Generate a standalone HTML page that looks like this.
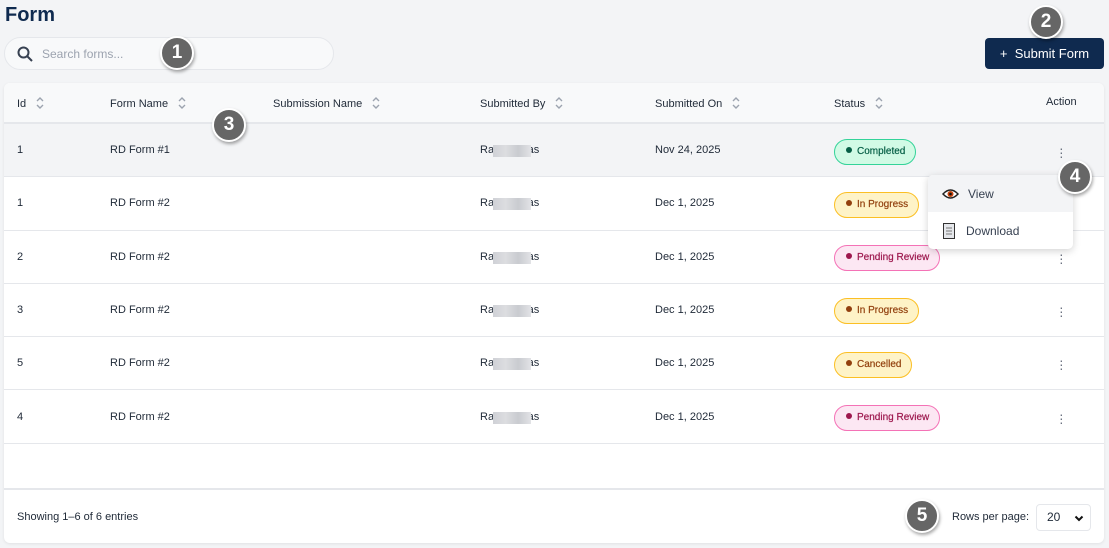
<!DOCTYPE html>
<html><head><meta charset="utf-8"><style>
*{box-sizing:border-box;margin:0;padding:0}
body{width:1109px;height:548px;background:#f3f4f6;font-family:"Liberation Sans",sans-serif;position:relative;overflow:hidden;color:#1f2937}
.abs{position:absolute}
h1{position:absolute;left:5px;top:4px;font-size:20px;font-weight:700;color:#0f2a4f}
.search{left:4px;top:37px;width:330px;height:33px;border:1px solid #e5e7eb;border-radius:17px;background:#f8f9fa}
.search span{position:absolute;left:37px;top:9px;font-size:12px;color:#9ca3af}
.btn{left:985px;top:38px;width:119px;height:31px;background:#0f2a4f;border-radius:4px;color:#fff;font-size:13px;line-height:31px;text-align:center}
.card{left:4px;top:83px;width:1100px;height:460px;background:#fff;border-radius:6px;box-shadow:0 1px 3px rgba(0,0,0,.08);overflow:hidden}
.thead{position:absolute;left:0;top:0;width:100%;height:41px;background:#f8f9fa;border-bottom:2px solid #e5e7eb}
.th{position:absolute;top:13px;font-size:11px;color:#1f2937}
.sort{display:inline-block;margin-left:9px;vertical-align:middle;position:relative;top:-1px}
.row{position:absolute;left:0;width:100%;border-bottom:1px solid #e5e7eb}
.td{position:absolute;font-size:11px;color:#1f2937}
.badge{position:absolute;left:830px;height:26px;border-radius:13px;font-size:10px;padding:0 10px 0 11px;line-height:24px;border:1px solid;-webkit-text-stroke:.2px}
.badge i{display:inline-block;width:6px;height:6px;border-radius:3px;margin-right:5px;vertical-align:middle;position:relative;top:-1px}
.dots{position:absolute;left:1055px;font-size:14px;color:#6b7280;line-height:4px;width:4px}
.blur{position:absolute;left:493px;width:38px;height:12px;background:linear-gradient(90deg,#cfd1d6,#dcdde0,#c9cbd0,#e2e3e6)}
.m{position:absolute;width:34px;height:34px;border-radius:17px;background:#666;border:2px solid #fff;box-shadow:1px 2px 3px rgba(0,0,0,.35);color:#fff;font-weight:700;font-size:19px;text-align:center;line-height:30px}
.menu{left:928px;top:175px;width:145px;height:74px;background:#fff;border-radius:5px;box-shadow:0 2px 8px rgba(0,0,0,.18)}
</style></head><body>
<h1>Form</h1>
<div class="abs search"><svg class="abs" style="left:12px;top:8px" width="16" height="16" viewBox="0 0 16 16"><circle cx="6.5" cy="6.5" r="5" fill="none" stroke="#374151" stroke-width="2"/><path d="M10 10l5 5" stroke="#374151" stroke-width="2"/></svg><span>Search forms...</span></div>
<div class="abs btn">+&nbsp;&nbsp;Submit Form</div>
<div class="abs card">
<div class="thead">
<div class="th" style="left:13px">Id<svg class="sort" width="10" height="16" viewBox="0 0 10 16"><path d="M2 6l3-3 3 3M2 10l3 3 3-3" fill="none" stroke="#9ca3af" stroke-width="1.4"/></svg></div>
<div class="th" style="left:106px">Form Name<svg class="sort" width="10" height="16" viewBox="0 0 10 16"><path d="M2 6l3-3 3 3M2 10l3 3 3-3" fill="none" stroke="#9ca3af" stroke-width="1.4"/></svg></div>
<div class="th" style="left:269px">Submission Name<svg class="sort" width="10" height="16" viewBox="0 0 10 16"><path d="M2 6l3-3 3 3M2 10l3 3 3-3" fill="none" stroke="#9ca3af" stroke-width="1.4"/></svg></div>
<div class="th" style="left:476px">Submitted By<svg class="sort" width="10" height="16" viewBox="0 0 10 16"><path d="M2 6l3-3 3 3M2 10l3 3 3-3" fill="none" stroke="#9ca3af" stroke-width="1.4"/></svg></div>
<div class="th" style="left:651px">Submitted On<svg class="sort" width="10" height="16" viewBox="0 0 10 16"><path d="M2 6l3-3 3 3M2 10l3 3 3-3" fill="none" stroke="#9ca3af" stroke-width="1.4"/></svg></div>
<div class="th" style="left:830px">Status<svg class="sort" width="10" height="16" viewBox="0 0 10 16"><path d="M2 6l3-3 3 3M2 10l3 3 3-3" fill="none" stroke="#9ca3af" stroke-width="1.4"/></svg></div>
<div class="th" style="left:1042px">Action</div>
</div>
<div class="row" style="top:41px;height:53px;background:#f3f4f6"></div>
<div class="row" style="top:94px;height:54px"></div>
<div class="row" style="top:148px;height:53px"></div>
<div class="row" style="top:201px;height:53px"></div>
<div class="row" style="top:254px;height:53px"></div>
<div class="row" style="top:307px;height:54px"></div>
<div class="row" style="top:361px;height:46px;border-bottom:2px solid #e5e7eb"></div>

<div class="td" style="left:13px;top:61px">1</div><div class="td" style="left:106px;top:61px">RD Form #1</div><div class="td" style="left:476px;top:61px">Ra&nbsp;&nbsp;&nbsp;&nbsp;&nbsp;&nbsp;&nbsp;&nbsp;&nbsp;&nbsp;&nbsp;as</div><div class="blur" style="top:62px;left:489px"></div><div class="td" style="left:651px;top:61px">Nov 24, 2025</div>
<div class="badge" style="top:56px;background:#d1fae5;border-color:#34d399;color:#065f46"><i style="background:#065f46"></i>Completed</div><div class="dots" style="top:63px">·<br>·<br>·</div>

<div class="td" style="left:13px;top:114px">1</div><div class="td" style="left:106px;top:114px">RD Form #2</div><div class="td" style="left:476px;top:114px">Ra&nbsp;&nbsp;&nbsp;&nbsp;&nbsp;&nbsp;&nbsp;&nbsp;&nbsp;&nbsp;&nbsp;as</div><div class="blur" style="top:115px;left:489px"></div><div class="td" style="left:651px;top:114px">Dec 1, 2025</div>
<div class="badge" style="top:109px;background:#fef3c7;border-color:#fbbf24;color:#92400e"><i style="background:#92400e"></i>In Progress</div>

<div class="td" style="left:13px;top:168px">2</div><div class="td" style="left:106px;top:168px">RD Form #2</div><div class="td" style="left:476px;top:168px">Ra&nbsp;&nbsp;&nbsp;&nbsp;&nbsp;&nbsp;&nbsp;&nbsp;&nbsp;&nbsp;&nbsp;as</div><div class="blur" style="top:169px;left:489px"></div><div class="td" style="left:651px;top:168px">Dec 1, 2025</div>
<div class="badge" style="top:162px;background:#fce7f3;border-color:#f472b6;color:#9d174d"><i style="background:#9d174d"></i>Pending Review</div><div class="dots" style="top:169px">·<br>·<br>·</div>

<div class="td" style="left:13px;top:221px">3</div><div class="td" style="left:106px;top:221px">RD Form #2</div><div class="td" style="left:476px;top:221px">Ra&nbsp;&nbsp;&nbsp;&nbsp;&nbsp;&nbsp;&nbsp;&nbsp;&nbsp;&nbsp;&nbsp;as</div><div class="blur" style="top:222px;left:489px"></div><div class="td" style="left:651px;top:221px">Dec 1, 2025</div>
<div class="badge" style="top:215px;background:#fef3c7;border-color:#fbbf24;color:#92400e"><i style="background:#92400e"></i>In Progress</div><div class="dots" style="top:222px">·<br>·<br>·</div>

<div class="td" style="left:13px;top:274px">5</div><div class="td" style="left:106px;top:274px">RD Form #2</div><div class="td" style="left:476px;top:274px">Ra&nbsp;&nbsp;&nbsp;&nbsp;&nbsp;&nbsp;&nbsp;&nbsp;&nbsp;&nbsp;&nbsp;as</div><div class="blur" style="top:275px;left:489px"></div><div class="td" style="left:651px;top:274px">Dec 1, 2025</div>
<div class="badge" style="top:269px;background:#fef3c7;border-color:#fbbf24;color:#92400e"><i style="background:#92400e"></i>Cancelled</div><div class="dots" style="top:275px">·<br>·<br>·</div>

<div class="td" style="left:13px;top:328px">4</div><div class="td" style="left:106px;top:328px">RD Form #2</div><div class="td" style="left:476px;top:328px">Ra&nbsp;&nbsp;&nbsp;&nbsp;&nbsp;&nbsp;&nbsp;&nbsp;&nbsp;&nbsp;&nbsp;as</div><div class="blur" style="top:329px;left:489px"></div><div class="td" style="left:651px;top:328px">Dec 1, 2025</div>
<div class="badge" style="top:322px;background:#fce7f3;border-color:#f472b6;color:#9d174d"><i style="background:#9d174d"></i>Pending Review</div><div class="dots" style="top:329px">·<br>·<br>·</div>

<div class="td" style="left:13px;top:428px">Showing 1–6 of 6 entries</div>
<div class="td" style="left:948px;top:428px">Rows per page:</div>
<div class="abs" style="left:1032px;top:421px;width:55px;height:27px;border:1px solid #e5e7eb;border-radius:4px;font-size:12px;line-height:25px;padding-left:10px">20<svg class="abs" style="right:6px;top:10px" width="10" height="7" viewBox="0 0 10 7"><path d="M1.5 1.5l3.5 3.5 3.5-3.5" fill="none" stroke="#111" stroke-width="2"/></svg></div>
</div>
<div class="abs menu">
<div class="abs" style="left:0;top:0;width:145px;height:37px;background:#f3f4f6;border-radius:5px 5px 0 0"></div>
<svg class="abs" style="left:14px;top:13px" width="17" height="12" viewBox="0 0 17 12"><path d="M1 6Q8.5-2 16 6Q8.5 14 1 6Z" fill="#fff" stroke="#222" stroke-width="1.5"/><circle cx="8.5" cy="6" r="3" fill="#c2410c"/><circle cx="8.5" cy="6" r="1.3" fill="#111"/></svg>
<div class="abs" style="left:40px;top:12px;font-size:12px;color:#374151">View</div>
<svg class="abs" style="left:15px;top:48px" width="12" height="16" viewBox="0 0 12 16"><rect x="0.5" y="0.5" width="11" height="15" fill="#e5e7eb" stroke="#333"/><path d="M3 5h6M3 8h6M3 11h6" stroke="#777"/></svg>
<div class="abs" style="left:38px;top:49px;font-size:12px;color:#374151">Download</div>
</div>
<div class="m" style="left:160px;top:36px">1</div>
<div class="m" style="left:1029px;top:5px">2</div>
<div class="m" style="left:212px;top:108px">3</div>
<div class="m" style="left:1058px;top:160px">4</div>
<div class="m" style="left:905px;top:499px">5</div>
</body></html>
